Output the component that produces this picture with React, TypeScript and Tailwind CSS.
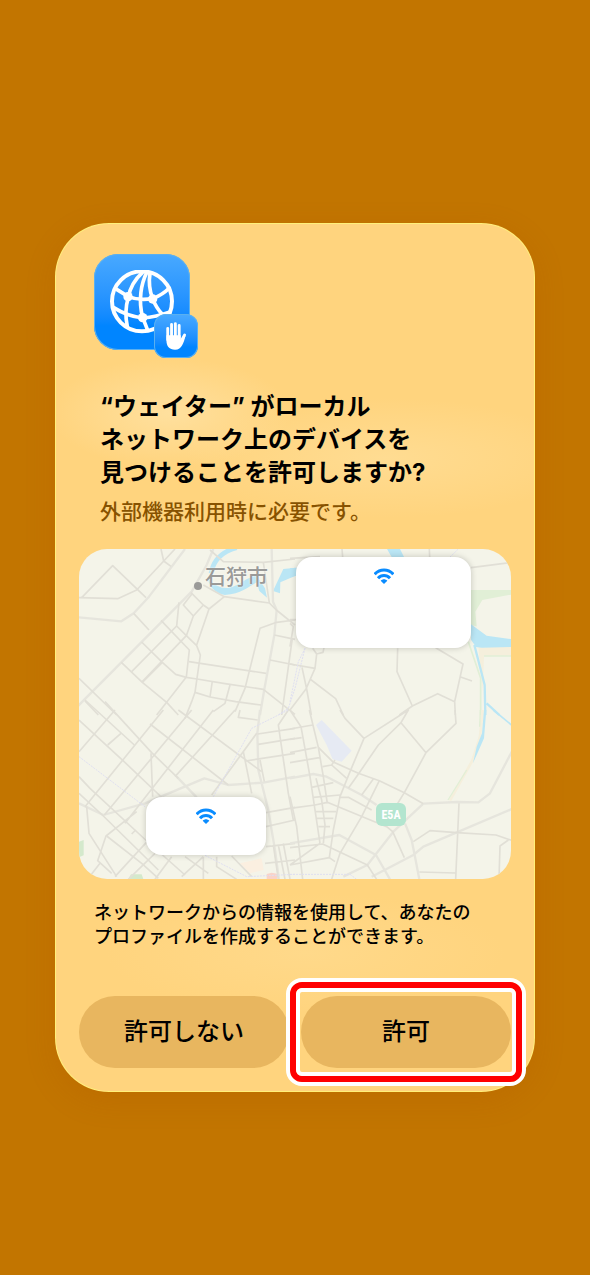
const FONT = "font-[Inter,'Noto_Sans_CJK_JP',sans-serif]";

function GlobeIcon() {
  return (
    <svg viewBox="0 0 192 192" className="size-16" fill="none" stroke="white" strokeLinecap="round" aria-hidden="true">
      <circle cx="96" cy="94" r="90" strokeWidth="12" />
      <g strokeWidth="11">
        <path d="M97 8C75 28 60 52 55 82C46 112 46 142 52 170" />
        <path d="M110 8C94 40 84 90 98 142L112 178" />
        <path d="M120 10C116 34 118 60 128 86C136 108 146 122 158 134" />
        <path d="M20 58L55 80C80 90 104 90 128 86C148 78 166 66 178 54" />
        <path d="M10 112C38 130 66 140 98 144C124 142 152 136 180 126" />
      </g>
      <g fill="white" stroke="none">
        <circle cx="54" cy="80" r="14" />
        <circle cx="128" cy="87" r="14" />
        <circle cx="98" cy="143" r="14" />
      </g>
    </svg>
  );
}

function HandIcon() {
  return (
    <svg viewBox="0 0 66 88" className="h-7 w-[22px]" fill="none" stroke="white" strokeWidth="9" strokeLinecap="round" aria-hidden="true">
      <path d="M7 20V56M19 8V50M31 5V50M43 11V52" />
      <path d="M60 41L48 62" />
      <path fill="white" stroke="none" d="M3 42H48V56L63 43C58 62 52 87 30 87C12 87 3 76 3 58Z" />
    </svg>
  );
}

function WifiIcon() {
  return (
    <svg viewBox="0 0 60 48" className="h-4 w-5" fill="none" stroke="#0a8cff" strokeWidth="9" aria-hidden="true">
      <path d="M2 19C17 2 43 2 58 19" />
      <path d="M12 31C22 20 38 20 48 31" />
      <path fill="#0a8cff" stroke="none" d="M20 38C26 32 34 32 40 38L30 48Z" />
    </svg>
  );
}

// 道路は四分割で描く
function MapDrawing() {
  return (
    <svg viewBox="0 0 1296 990" preserveAspectRatio="xMidYMid slice" className="absolute inset-0 size-full" fill="none" stroke="#e1dfd6" strokeWidth="5" strokeLinejoin="round" aria-hidden="true">
      <rect width="1296" height="990" fill="#f4f4e9" stroke="none" />

      {/* 北西 */}
      <g transform="translate(-12 -12)">
        <path stroke="#bae6f5" strokeWidth="14" d="M485 8C440 20 415 45 408 85" />
        <path fill="#bae6f5" stroke="none" d="M398 98C420 122 440 132 462 128C495 122 515 95 545 92L570 130L576 158L553 138L545 112C520 125 500 146 450 150C420 144 402 125 398 98ZM625 72L662 68V92L616 112L615 145L594 138Z" />
        <path stroke="#e6e5dd" strokeWidth="7" d="M0 492L350 140L395 60L415 12M605 195L598 270L568 433L555 510M590 12L594 170L605 195M12 217L139 229L176 205L222 155L330 12" />
        <path d="M20 158L113 62L213 158M12 158L128 161L185 135L300 12M258 12L266 48L288 64M176 205L222 255M258 226L343 315L334 396L245 510M312 172L305 243L334 272L365 302L376 330L360 442L405 456L482 470L558 480" />
        <path d="M348 143L385 180L355 213L325 180L350 148M385 180L402 192L448 155L385 120M402 192L365 300M355 213L334 272L202 410M305 243L170 380M200 291L262 352L302 388L334 397L366 402L450 416L565 433L660 508" />
        <path d="M262 352L202 412M139 352L202 412L275 472L310 510M360 442L350 470L330 520M342 350L573 385M412 408L405 456M465 420L450 475L415 500M448 155L583 174L604 195L660 240M660 225L605 232L555 250L510 430L480 500" />
        <path d="M598 270L660 283M585 345L660 360M652 280L620 510M405 15L445 50L565 52L660 42M565 52L583 174M12 400L125 510M30 468L70 510" />
        <path stroke="#dfdff0" strokeWidth="3" strokeDasharray="6 3" d="M690 310L660 430L640 490L610 510" />
      </g>

      {/* 北東 */}
      <g transform="translate(633 -12)">
        <path fill="#e1efd6" stroke="none" d="M540 135H668V148L577 165L556 200L560 244L540 240Z" />
        <path fill="#f5efdc" stroke="none" d="M565 306L668 304V332L582 334L578 440Z" />
        <path stroke="#e1efd6" d="M535 290L572 400V510M582 333H668" />
        <path fill="#bae6f5" stroke="none" d="M291 12H330L342 36H305ZM543 238L590 272L668 283V306L575 308L558 306L543 284ZM0 70L20 68V92L0 96Z" />
        <path stroke="#bae6f5" strokeWidth="7" d="M553 300L584 420L586 510M590 475L628 510" />
        <path d="M156 12L158 36M418 12L419 36M543 68L668 52M0 40L90 35M0 224H18M323 310L321 380L367 483L328 510M437 308L519 357L494 470L496 510M367 483L443 446L494 470M512 396L546 408" />
        <path d="M68 310L80 327L99 322L102 308M80 327L75 370L48 432L0 495M60 402L137 461L160 510M36 367L50 432L64 510M0 357L75 370M0 235L10 245L0 305" />
        <path stroke="#dfdff0" strokeWidth="3" strokeDasharray="6 3" d="M45 310L25 350L0 470M480 36L505 12" />
      </g>

      {/* 南西 */}
      <g transform="translate(-12 483)">
        <path fill="#d4e9cc" stroke="none" d="M12 395L26 390V436L12 442ZM168 493H200L206 510H158Z" />
        <path fill="#fbefe0" stroke="none" d="M495 460L560 445L566 480L525 490Z" />
        <path fill="#f9d3c9" stroke="none" d="M575 492L590 488L610 492L605 510H575Z" />
        <path stroke="#e6e5dd" strokeWidth="7" d="M12 280L85 315L210 280L388 205L460 225L565 218L660 200M555 0L547 70L550 180L580 300L600 420L612 510M305 200L365 262" />
        <path d="M12 30L140 148L300 300M30 -30L178 105M90 -25L230 128L310 205M225 42L460 225M310 0L560 185M12 200L45 235L212 390L330 495M12 250L85 318L250 480M95 378L200 460L250 505M35 290L42 370L125 500" />
        <path d="M30 290L265 0M88 315L350 0M150 340L415 0M300 200L480 0M12 125L120 0M98 105L138 70M185 305L93 378L68 452L110 490M75 460L40 505M120 500L230 380M160 508L240 430M170 372L182 360M228 130L233 260" />
        <path d="M410 255L545 70M495 0L490 22L548 30M548 72L660 55M550 103L660 85M512 153L660 130M505 125L530 250M555 150L568 215M640 0L610 45L640 250L655 330M573 308L660 292M573 350L660 330" />
        <path d="M573 410L660 400M570 460L660 450M595 405L610 508M610 405L630 508M625 400L645 508M385 440V508M425 440V470L485 508M470 438L530 500M240 508L290 440M320 500L385 440M330 440L400 490" />
        <path stroke="#dfdff0" strokeWidth="3" strokeDasharray="6 3" d="M12 140L210 290M415 260L530 55L640 0M390 436L515 500L660 493" />
      </g>

      {/* 南東 */}
      <g transform="translate(633 483)">
        <path fill="#e6eaf3" stroke="none" d="M95 30L185 122L155 155L128 148L110 105L78 45Z" />
        <path stroke="#f5efdc" strokeWidth="8" d="M578 0L570 80L548 150L480 272" />
        <path stroke="#e1efd6" strokeWidth="4" d="M571 0L569 50M530 180L474 270" />
        <path fill="#bae6f5" stroke="none" d="M582 0H589L582 85L549 160L560 110L576 70Z" />
        <path stroke="#bae6f5" d="M610 0L668 48" />
        <path stroke="#e6e5dd" strokeWidth="7" d="M0 205L70 192L110 200L215 255L260 285M400 281L500 276L565 277L600 250L668 120M0 400L148 375L258 435L300 508M345 340L365 390L375 440L388 508M245 500L370 435L400 410L668 296M400 281L310 365L232 465L160 500" />
        <path d="M150 0L165 25L222 85L355 0L333 38L265 105L210 185L175 235M222 85L180 185L150 260L130 360L118 443M333 38L408 128L343 248L320 285M408 128L498 40L495 0M85 112L128 155L205 190L268 212L343 248L400 281" />
        <path d="M0 0L33 50L60 200L75 300L90 400M58 0L85 112L100 200L112 280M0 57L68 45M0 88L35 83M0 128L80 112M0 158L88 143M98 170L125 165L170 205M125 165L135 150M65 232L130 218M70 262L150 255" />
        <path d="M0 295L75 285L112 277L290 350L308 365L343 443M148 262H175L245 300M75 305H138M80 325H130M85 350H120M78 205L95 270L105 345L100 400M268 212L215 320L150 430L125 508M250 207L215 255" />
        <path d="M90 400L0 465M0 413L98 402L232 465L260 508M0 465L118 443L135 455M370 395L420 362L500 368L618 375L668 392M507 280L497 508M388 486L497 489M655 390L630 408L627 508M0 260L20 350L38 508" />
        <path stroke="#dfdff0" strokeWidth="3" strokeDasharray="6 3" d="M0 493H180L200 508" />
      </g>
    </svg>
  );
}

function NetworkMap() {
  return (
    <div className="relative flex h-[330px] flex-col justify-between overflow-hidden rounded-[28px] pt-2 pr-10 pb-6 pl-[67px]">
      <MapDrawing />
      <div className="absolute left-[115px] top-3 flex items-end gap-[3px] text-[#9a9a98]">
        <span className="mb-[3px] size-2 rounded-full bg-[#9a9a98]" />
        <span className="text-[21px] leading-8 font-medium [text-shadow:0_0_2px_white]">石狩市</span>
      </div>
      <span className="absolute left-[297px] top-[254px] flex h-[23px] w-[30px] items-center justify-center rounded-md bg-[#b3e5cf] font-['Liberation_Sans_Narrow','Roboto_Condensed','Roboto',sans-serif] text-xs font-bold text-white">
        E5A
      </span>
      <div className="relative flex h-[91px] w-[175px] justify-center self-end rounded-2xl bg-white pt-[11px] shadow-[0_0_6px_rgba(0,0,0,0.2)]">
        <WifiIcon />
      </div>
      <div className="relative flex h-[58px] w-[120px] justify-center rounded-2xl bg-white pt-[11px] shadow-[0_0_6px_rgba(0,0,0,0.2)]">
        <WifiIcon />
      </div>
    </div>
  );
}

export default function App() {
  return (
    <main className={`flex min-h-screen items-start justify-center bg-[#c27500] px-6 pt-[223px] pb-16 text-black ${FONT}`}>
      <section
        role="dialog"
        aria-labelledby="dialog-title"
        className="flex w-full max-w-[480px] flex-col gap-[22px] rounded-[54px] bg-[#ffd47e] bg-[radial-gradient(ellipse_120px_55px_at_115px_190px,#ffe09e,transparent),radial-gradient(ellipse_200px_60px_at_330px_235px,#ffdc92,transparent),radial-gradient(ellipse_200px_60px_at_250px_730px,#ffd98a,transparent)] px-6 pt-[31px] pb-6 shadow-[inset_0_0_0_1px_#fff07a,0_8px_30px_rgba(170,80,0,0.2)]"
      >
        <header className="flex flex-col gap-10">
          <div className="relative ml-[15px] flex size-24 items-center justify-center rounded-3xl bg-linear-to-b from-[#48a9ff] to-[#0085ff] to-75% shadow-[inset_0_0_0_1px_#5ab0f0]">
            <GlobeIcon />
            <div className="absolute -right-2 -bottom-2 flex size-11 items-center justify-center rounded-xl bg-linear-to-b from-[#48a9ff] to-[#0085ff] to-75% shadow-[inset_0_0_0_1px_#5ab0f0]">
              <HandIcon />
            </div>
          </div>

          <div className="flex flex-col gap-2 pl-[21px]">
            <h1 id="dialog-title" className="text-2xl leading-[33px] font-bold">
              “ウェイター” がローカル
              <br />
              ネットワーク上のデバイスを
              <br />
              見つけることを許可しますか?
            </h1>
            <p className="text-[21px] leading-[30px] font-medium text-[#875200]">外部機器利用時に必要です。</p>
          </div>
        </header>

        <NetworkMap />

        <footer className="flex flex-col gap-[47px]">
          <p className="pl-[15px] text-lg leading-6 font-medium">
            ネットワークからの情報を使用して、あなたの
            <br />
            プロファイルを作成することができます。
          </p>

          <div className="flex gap-3">
            <button type="button" className="h-18 flex-1 rounded-full bg-[#e8b65f] text-2xl font-medium">
              許可しない
            </button>
            <div className="relative flex-1">
              <button type="button" className="h-18 w-full rounded-full bg-[#e8b65f] text-2xl font-medium">
                許可
              </button>
              {/* 強調枠 */}
              <div className="pointer-events-none absolute -inset-x-[15px] -inset-y-[18px] rounded-2xl border-4 border-white">
                <div className="h-full rounded-xl border-6 border-[#ff0000]">
                  <div className="h-full rounded-md border-4 border-white" />
                </div>
              </div>
            </div>
          </div>
        </footer>
      </section>
    </main>
  );
}
